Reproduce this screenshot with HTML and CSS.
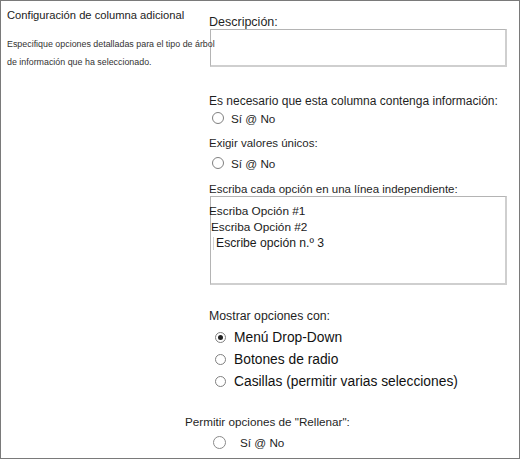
FILE: index.html
```html
<!DOCTYPE html>
<html lang="es">
<head>
<meta charset="utf-8">
<title>Configuración de columna adicional</title>
<link rel="stylesheet" href="styles.css">
</head>
<body>
<div class="panel">
  <section class="intro">
    <h2 class="intro-title">Configuración de columna adicional</h2>
    <p class="intro-text">Especifique opciones detalladas para el tipo de árbol<br>de información que ha seleccionado.</p>
  </section>
  <section class="fields">
    <div class="label label-desc">Descripción:</div>
    <div class="box box-desc"></div>

    <div class="label label-req">Es necesario que esta columna contenga información:</div>
    <div class="radio-row row-req"><span class="radio"></span><span>Sí @ No</span></div>

    <div class="label label-unique">Exigir valores únicos:</div>
    <div class="radio-row row-unique"><span class="radio"></span><span>Sí @ No</span></div>

    <div class="label label-choices">Escriba cada opción en una línea independiente:</div>
    <div class="box box-choices">
      <div class="choice choice-1">Escriba Opción #1</div>
      <div class="choice choice-2">Escriba Opción #2</div>
      <div class="choice choice-3"><span class="caret"></span>Escribe opción n.º 3</div>
    </div>

    <div class="label label-display">Mostrar opciones con:</div>
    <div class="options">
      <div class="option"><span class="radio radio-sm checked"></span><span>Menú Drop-Down</span></div>
      <div class="option"><span class="radio radio-sm"></span><span>Botones de radio</span></div>
      <div class="option"><span class="radio radio-sm"></span><span>Casillas (permitir varias selecciones)</span></div>
    </div>

    <div class="label label-fill">Permitir opciones de "Rellenar":</div>
    <div class="radio-row row-fill"><span class="radio radio-lg"></span><span>Sí @ No</span></div>
  </section>
</div>
</body>
</html>
```

FILE: styles.css
```css
html, body {
  margin: 0;
  padding: 0;
  background: #ffffff;
}

body {
  font-family: "Liberation Sans", Arial, sans-serif;
  color: #1a1a1a;
}

.panel {
  width: 520px;
  height: 459px;
  box-sizing: border-box;
  border: 1px solid #7a7a7a;
  display: flex;
  overflow: hidden;
}

/* left description column */
.intro {
  width: 203px;
  flex: none;
  padding: 6px 0 0 6px;
  box-sizing: border-box;
  white-space: nowrap;
  position: relative;
  z-index: 1;
}

.intro-title {
  margin: 0;
  font-size: 11.2px;
  font-weight: normal;
  line-height: 16px;
  color: #222;
}

.intro-text {
  margin: 12px 0 0;
  font-size: 8.9px;
  line-height: 18px;
  color: #333;
}

/* right settings column */
.fields {
  flex: 1;
  padding: 14px 0 0 5px;
  display: flex;
  flex-direction: column;
  align-items: flex-start;
}

.label {
  font-size: 12px;
  line-height: 16px;
  white-space: nowrap;
  color: #1f1f1f;
}

.label-desc { font-size: 12.5px; line-height: 14px; }
.label-req { margin-top: 26px; }
.label-unique { margin-top: 8px; font-size: 11.5px; }
.label-choices { margin-top: 10px; line-height: 14px; font-size: 11.5px; }
.label-display { margin-top: 23px; font-size: 12.3px; }
.label-fill { margin-top: 22px; margin-left: -24px; font-size: 11.7px; }

.box {
  box-sizing: border-box;
  width: 297px;
  margin-left: 1px;
  border: 1px solid #b4b4b4;
  border-right: 2px solid #cfcfcf;
  border-bottom: 2px solid #cfcfcf;
  background: #fff;
}

.box-desc { height: 38px; }
.box-choices {
  height: 89px;
  padding-top: 6px;
}

.choice {
  font-size: 11.8px;
  line-height: 16px;
  color: #1a1a1a;
  white-space: nowrap;
  display: flex;
  align-items: center;
}

.choice-1 { margin-left: -2px; }
.choice-2 { margin-left: 0; }
.choice-3 { margin-left: 2px; font-size: 12.2px; }

.caret {
  width: 1px;
  height: 13px;
  background: #d4d4d4;
  margin-right: 2px;
}

.radio-row {
  display: flex;
  align-items: center;
  height: 18px;
  font-size: 11.7px;
  color: #1f1f1f;
}

.row-req { margin-top: 0; }
.row-unique { margin-top: 3px; }
.row-fill { margin-top: 3px; }

.radio {
  box-sizing: border-box;
  width: 12px;
  height: 12px;
  border-radius: 50%;
  border: 1px solid #808080;
  background: #fff;
  margin: 0 7px 0 3px;
  display: inline-flex;
  align-items: center;
  justify-content: center;
  flex: none;
}

.radio-lg {
  width: 13px;
  height: 13px;
  border-color: #8a8a8a;
  margin: 0 14px 0 4px;
}

.options {
  margin-top: 2px;
  display: flex;
  flex-direction: column;
}

.option {
  display: flex;
  align-items: center;
  height: 22px;
  font-size: 13.8px;
  color: #111;
}

.radio-sm {
  width: 11px;
  height: 11px;
  margin: 0 8px 0 6px;
}

.radio.checked::after {
  content: "";
  width: 5px;
  height: 5px;
  border-radius: 50%;
  background: #222;
}
```
